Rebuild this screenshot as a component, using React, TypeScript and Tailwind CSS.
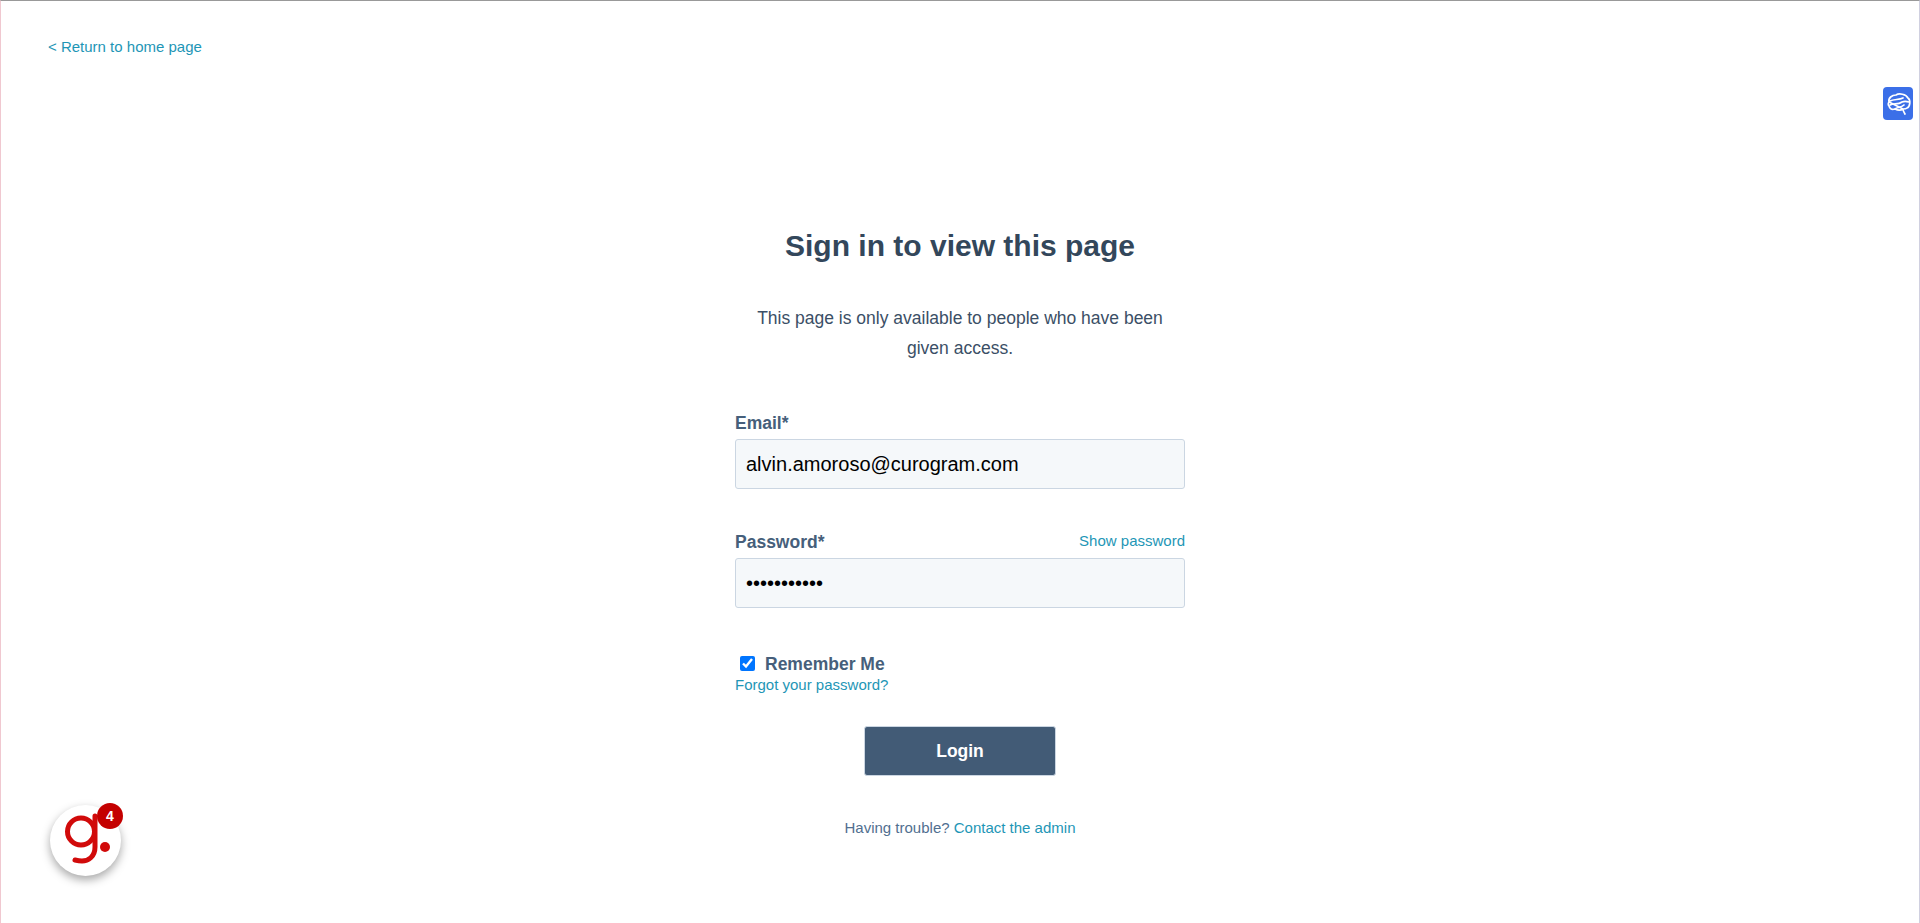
function BrainIcon() {
  return (
    <svg viewBox="0 0 30 33" className="h-full w-full" fill="none" stroke="white" strokeWidth="1.7" strokeLinecap="round" strokeLinejoin="round">
      <path d="M6 15C5 11 9 8 13 8C16 6 23 7 25 11C28 13 27 20 24 21C23 22 21 22 20 22C20 24 21 25 22 27M20 22C17 24 14 23 12 22C9 23 7 22 6 19C5 18 5 16 6 15Z" />
      <path d="M7 14C11 12 16 13 20 11" />
      <path d="M7 18C11 16 15 18 19 15C21 14 23 14 26 15" />
      <path d="M12 22C14 20 18 21 21 18" />
    </svg>
  );
}

function NotificationBadge() {
  return (
    <div className="fixed left-[50px] top-[805px] h-[71px] w-[71px] rounded-full bg-white shadow-[0_4px_10px_rgba(0,0,0,0.35)]">
      <svg viewBox="0 0 71 71" className="h-full w-full" fill="none" stroke="#d10a0a" strokeWidth="5">
        <circle cx="31" cy="26.5" r="13.5" />
        <path d="M45 11V42C45 52 38 56 32 56C29 56 27 55.5 25 55" strokeLinecap="round" />
        <circle cx="55" cy="42" r="5" fill="#d10a0a" stroke="none" />
      </svg>
      <span className="absolute left-[47px] top-[-2px] flex h-[26px] w-[26px] items-center justify-center rounded-full bg-[#c40000] text-[14px] font-bold text-white">
        4
      </span>
    </div>
  );
}

export default function App() {
  return (
    <div className="box-border min-h-[923px] border-t border-r border-l border-t-[#999999] border-r-[#d0d0e0] border-l-[#f0c8d0] bg-white font-['Liberation_Sans',Arial,sans-serif]">
      <div className="px-[47px] pt-[34px]">
        <a href="#" className="text-[15px] leading-[20px] text-[#1e96b6]">
          &lt; Return to home page
        </a>
      </div>

      {/* Brain launcher */}
      <div className="fixed right-[7px] top-[87px] h-[33px] w-[30px] rounded-[4px] bg-[#3b6fe8]">
        <BrainIcon />
      </div>

      <div className="mx-auto mt-[169px] flex w-[450px] flex-col">
        <h1 className="text-center text-[30px] leading-[36px] font-bold text-[#33475b]">Sign in to view this page</h1>
        <p className="mx-auto mt-[39px] w-[420px] text-center text-[17.5px] leading-[30px] text-[#3b4f66]">
          This page is only available to people who have been given access.
        </p>

        <form className="mt-[50px] flex flex-col">
          <label className="text-[17.5px] leading-[20px] font-bold text-[#465f7b]">Email*</label>
          <input
            readOnly
            defaultValue="alvin.amoroso@curogram.com"
            className="mt-[6px] box-border h-[50px] w-full rounded-[3px] border border-[#cbd6e2] bg-[#f5f8fa] px-[10px] text-[20px] text-black outline-none"
          />

          <div className="mt-[42px] flex items-end justify-between">
            <label className="text-[17.5px] leading-[20px] font-bold text-[#465f7b]">Password*</label>
            <a href="#" className="mb-[1px] text-[15px] leading-[20px] text-[#1e96b6]">
              Show password
            </a>
          </div>
          <input
            readOnly
            type="password"
            defaultValue="abcdefghijk"
            className="mt-[6px] box-border h-[50px] w-full rounded-[3px] border border-[#cbd6e2] bg-[#f5f8fa] px-[10px] text-[20px] text-black outline-none"
          />

          <label className="mt-[46px] flex items-center pl-[5px] text-[17.5px] leading-[21px] font-bold text-[#465f7b]">
            <input readOnly type="checkbox" checked className="mb-[3px] h-[15px] w-[15px] accent-[#0075ff]" />
            <span className="ml-[10px]">Remember Me</span>
          </label>
          <a href="#" className="text-[15px] leading-[20px] text-[#1e96b6]">
            Forgot your password?
          </a>

          <button
            type="button"
            className="mx-auto mt-[31px] h-[50px] w-[192px] rounded-[3px] border border-[#cbd6e2] bg-[#425b76] text-[17.5px] font-bold text-white"
          >
            Login
          </button>

          <p className="mt-[42px] text-center text-[15px] leading-[20px] text-[#516f90]">
            Having trouble? <a href="#" className="text-[#1e96b6]">Contact the admin</a>
          </p>
        </form>
      </div>

      <NotificationBadge />
    </div>
  );
}
